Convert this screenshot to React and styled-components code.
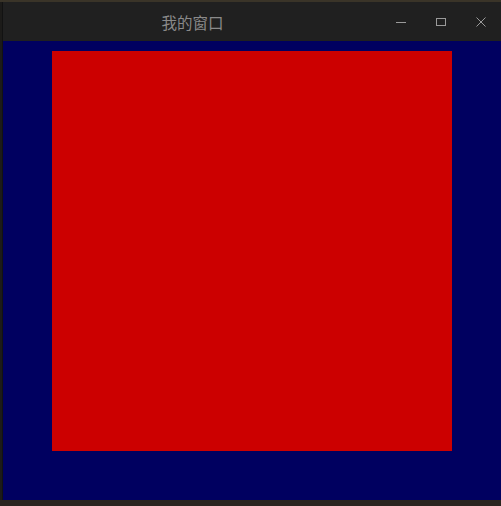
import React from 'react';
import styled, {createGlobalStyle} from 'styled-components';

const GlobalStyle = createGlobalStyle`
  html, body {
    margin: 0;
    padding: 0;
    background: #1c1b19;
  }
  body {
    width: 501px;
    height: 506px;
    overflow: hidden;
  }
`;

const Desktop = styled.div`
  width: 501px;
  height: 506px;
  padding-top: 2px;
  padding-left: 2px;
  box-sizing: border-box;
  background: linear-gradient(to bottom, #3a3428 0, #3a3428 2px, #1c1b19 2px, #1c1b19 500px, #2a2520 500px);
`;

const Window = styled.div`
  width: 499px;
  display: flex;
  flex-direction: column;
  border-left: 1px solid #121212;
  box-sizing: border-box;
`;

const TitleBar = styled.div`
  height: 39px;
  display: flex;
  align-items: center;
  background: #202020;
`;

const Title = styled.div`
  flex: 1;
  text-align: center;
  color: #8a8a8a;
  font-family: "Noto Sans CJK SC", "Noto Sans", sans-serif;
  font-size: 15.5px;
  padding-left: 1px;
`;

const ControlButton = styled.div`
  width: 40px;
  height: 39px;
  display: flex;
  align-items: center;
  justify-content: center;
  color: #9a9a9a;
`;

const Client = styled.div`
  height: 459px;
  background: #000060;
  padding: 10px 0 0 49px;
  box-sizing: border-box;
`;

const Square = styled.div`
  width: 400px;
  height: 400px;
  background: #cc0000;
`;

const App = () => {
    return (
        <Desktop>
            <GlobalStyle/>
            <Window>
                <TitleBar>
                    <Title>我的窗口</Title>
                    <ControlButton>
                        <svg width="10" height="10" viewBox="0 0 10 10">
                            <path d="M0 5.5 H10" stroke="currentColor" strokeWidth="1"/>
                        </svg>
                    </ControlButton>
                    <ControlButton>
                        <svg width="10" height="10" viewBox="0 0 10 10">
                            <rect x="0.5" y="1.5" width="9" height="7" fill="none" stroke="currentColor" strokeWidth="1"/>
                        </svg>
                    </ControlButton>
                    <ControlButton>
                        <svg width="10" height="10" viewBox="0 0 10 10">
                            <path d="M0.5 0.5 L9.5 9.5 M9.5 0.5 L0.5 9.5" stroke="currentColor" strokeWidth="1"/>
                        </svg>
                    </ControlButton>
                </TitleBar>
                <Client>
                    <Square/>
                </Client>
            </Window>
        </Desktop>
    );
};

export default App;
